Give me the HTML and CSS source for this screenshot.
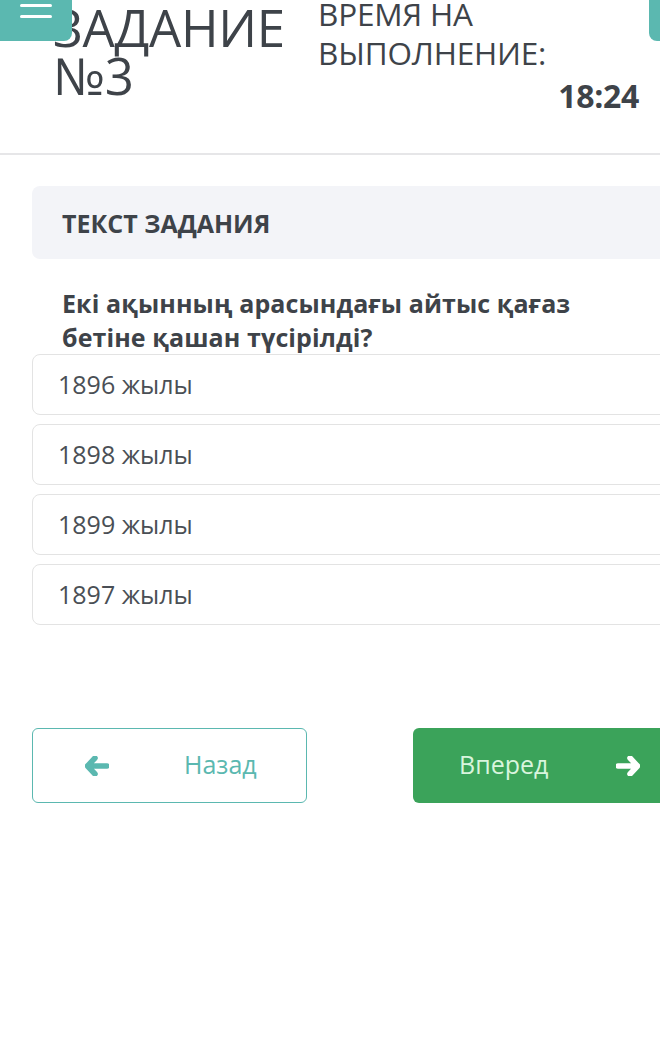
FILE: index.html
```html
<!DOCTYPE html>
<html lang="ru">
<head>
<meta charset="utf-8">
<link rel="stylesheet" href="styles.css">
</head>
<body>
<div class="page">
  <header class="header">
    <button class="menu-btn" aria-label="menu">
      <span class="bar"></span>
      <span class="bar"></span>
    </button>
    <div class="side-tab"></div>
    <h1 class="title">ЗАДАНИЕ<br>№3</h1>
    <div class="timer">
      <div class="timer-label">ВРЕМЯ НА<br>ВЫПОЛНЕНИЕ:</div>
      <div class="timer-value">18:24</div>
    </div>
  </header>
  <main class="content">
    <div class="task-head">ТЕКСТ ЗАДАНИЯ</div>
    <p class="question">Екі ақынның арасындағы айтыс қағаз бетіне қашан түсірілді?</p>
    <ul class="answers">
      <li class="answer">1896 жылы</li>
      <li class="answer">1898 жылы</li>
      <li class="answer">1899 жылы</li>
      <li class="answer">1897 жылы</li>
    </ul>
    <div class="nav">
      <button class="btn btn-back">
        <svg class="arrow" viewBox="0 0 24 20" width="24" height="20"><path d="M10 2 L2.5 10 L10 18 M3 10 H22" fill="none" stroke="currentColor" stroke-width="5.5" stroke-linecap="round" stroke-linejoin="round"/></svg>
        <span>Назад</span>
      </button>
      <button class="btn btn-next">
        <span>Вперед</span>
        <svg class="arrow" viewBox="0 0 24 20" width="24" height="20"><path d="M14 2 L21.5 10 L14 18 M21 10 H2" fill="none" stroke="currentColor" stroke-width="5.5" stroke-linecap="round" stroke-linejoin="round"/></svg>
      </button>
    </div>
  </main>
</div>
</body>
</html>
```
FILE: styles.css
```css
html, body {
  margin: 0;
  padding: 0;
  background: #fff;
  overflow: hidden;
}
body {
  font-family: "Open Sans", "Noto Sans", sans-serif;
  color: #3e4349;
}
.page {
  width: 660px;
  height: 1052px;
  position: relative;
  overflow: hidden;
}
.header {
  position: relative;
  display: flex;
  height: 153px;
  border-bottom: 2px solid #e6e6e8;
  box-sizing: content-box;
}
.menu-btn {
  position: absolute;
  left: 0;
  top: 0;
  width: 72px;
  height: 41px;
  border: none;
  padding: 4px 0 0 20px;
  background: #5bb8b0;
  border-radius: 0 0 8px 0;
  display: flex;
  flex-direction: column;
  gap: 8px;
  z-index: 2;
  box-sizing: border-box;
}
.menu-btn .bar {
  display: block;
  width: 32px;
  height: 3px;
  background: #fff;
  border-radius: 2px;
}
.side-tab {
  position: absolute;
  right: 0;
  top: 0;
  width: 11px;
  height: 41px;
  background: #5bb8b0;
  border-radius: 0 0 0 8px;
}
.title {
  margin: 0;
  padding: 0 0 0 53px;
  font-size: 51px;
  font-weight: 400;
  line-height: 48px;
  width: 265px;
  flex: none;
  margin-top: 3px;
  letter-spacing: -0.3px;
}
.timer {
  display: flex;
  flex-direction: column;
  width: 321px;
  flex: none;
}
.timer-label {
  font-size: 31.5px;
  line-height: 39px;
  margin-top: -6px;
  letter-spacing: -0.2px;
}
.timer-value {
  font-size: 32px;
  font-weight: 700;
  text-align: right;
  line-height: 40px;
  margin-top: 4px;
  letter-spacing: -0.3px;
}
.content {
  padding: 31px 0 0 32px;
  width: 700px;
}
.task-head {
  background: #f3f4f8;
  border-radius: 8px;
  height: 73px;
  display: flex;
  align-items: center;
  padding-left: 30px;
  font-size: 25px;
  font-weight: 700;
  letter-spacing: 0;
}
.question {
  margin: 27px 0 0 0;
  padding-left: 30px;
  font-size: 25px;
  font-weight: 700;
  line-height: 34px;
  width: 570px;
  letter-spacing: 0.1px;
}
.answers {
  list-style: none;
  margin: 0;
  padding: 0;
  display: flex;
  flex-direction: column;
  gap: 9px;
}
.answer {
  height: 61px;
  box-sizing: border-box;
  border: 1px solid #e3e3e3;
  border-radius: 8px;
  display: flex;
  align-items: center;
  padding-left: 25px;
  padding-bottom: 2px;
  font-size: 25px;
  color: #4a4f55;
}
.nav {
  display: flex;
  gap: 106px;
  margin-top: 103px;
}
.btn {
  height: 75px;
  border-radius: 6px;
  font-family: inherit;
  font-size: 25px;
  display: flex;
  align-items: center;
  box-sizing: border-box;
  cursor: pointer;
}
.btn span {
  padding-bottom: 4px;
}
.btn-back {
  width: 275px;
  background: #fff;
  border: 1px solid #5bb8b0;
  color: #5bb8b0;
  padding: 0 0 0 52px;
}
.btn-back span {
  margin-left: 75px;
}
.btn-next {
  width: 280px;
  background: #3ba35a;
  border: none;
  color: #d9f5de;
  padding: 0 0 0 46px;
}
.btn-next .arrow {
  color: #fff;
  margin-left: 68px;
}
```
